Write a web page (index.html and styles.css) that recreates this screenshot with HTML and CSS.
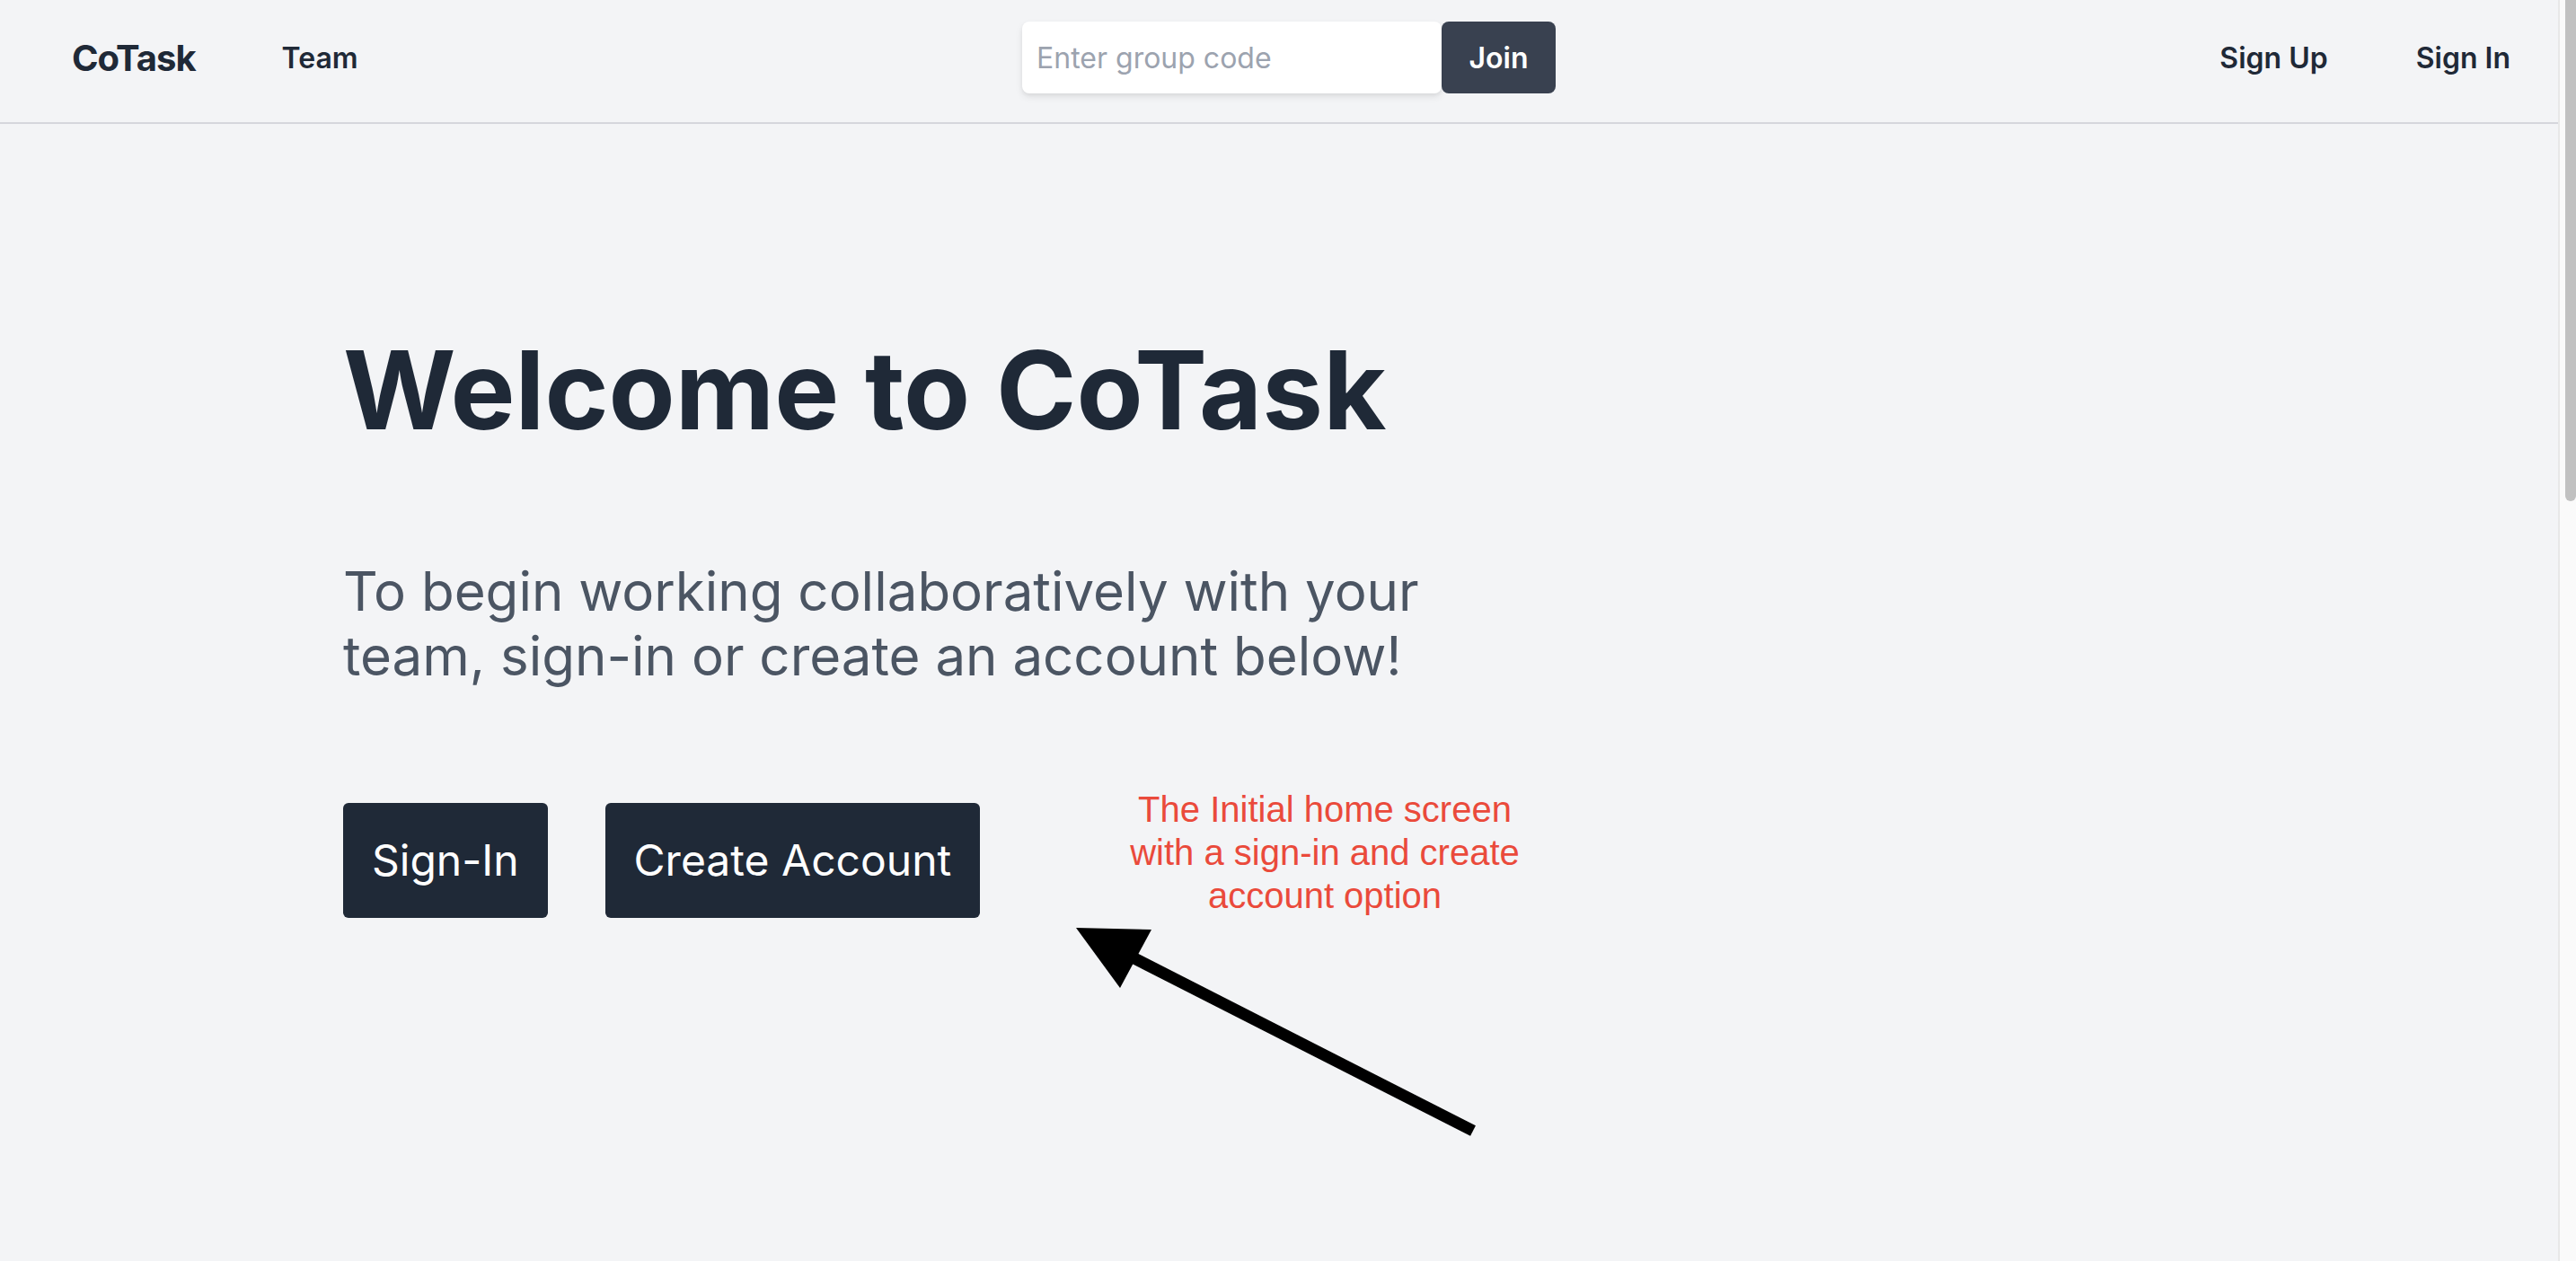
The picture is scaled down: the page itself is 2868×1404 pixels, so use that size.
FILE: index.html
```html
<!DOCTYPE html>
<html lang="en">
<head>
<meta charset="utf-8">
<title>CoTask</title>
<link rel="stylesheet" href="styles.css">
</head>
<body>
<div class="page">
  <div class="main">
    <header class="header">
      <div class="left">
        <a class="logo">CoTask</a>
        <a class="nav-link">Team</a>
      </div>
      <form class="join-form">
        <input class="code-input" type="text" placeholder="Enter group code">
        <button class="join-btn" type="button">Join</button>
      </form>
      <div class="right">
        <a class="nav-link">Sign Up</a>
        <a class="nav-link">Sign In</a>
      </div>
    </header>
    <section class="hero">
      <h1 class="title">Welcome to CoTask</h1>
      <p class="lead">To begin working collaboratively with your team, sign-in or create an account below!</p>
      <div class="actions">
        <button class="action-btn" type="button">Sign-In</button>
        <button class="action-btn" type="button">Create Account</button>
      </div>
      <div class="note">The Initial home screen<br>with a sign-in and create<br>account option</div>
      <svg class="arrow" width="480" height="270" viewBox="0 0 480 270">
        <line x1="75" y1="53" x2="460" y2="249" stroke="#000" stroke-width="13"/>
        <polygon points="18,23 102,25 67,90" fill="#000"/>
      </svg>
    </section>
  </div>
  <div class="scrollbar"><div class="thumb"></div></div>
</div>
</body>
</html>
```
FILE: styles.css
```css
html, body {
  margin: 0;
  padding: 0;
  height: 100%;
  overflow: hidden;
}
body {
  background: #f3f4f6;
  font-family: Inter, "Noto Sans", "Liberation Sans", sans-serif;
  color: #1f2937;
}
.page {
  display: flex;
  height: 1404px;
}
.main {
  flex: 1;
  min-width: 0;
  display: flex;
  flex-direction: column;
}
.header {
  display: flex;
  justify-content: space-between;
  align-items: center;
  height: 80px;
  padding: 24px 53px 32px 80px;
  border-bottom: 2px solid #d5d6dc;
}
.left, .right {
  display: flex;
  align-items: center;
}
.left { gap: 96px; }
.right { gap: 98px; }
.logo {
  font-size: 40px;
  font-weight: 700;
  letter-spacing: -1px;
  color: #1f2937;
}
.nav-link {
  font-size: 32px;
  font-weight: 600;
  color: #1f2937;
}
.join-form {
  display: flex;
  margin: 0;
}
.code-input {
  width: 467px;
  height: 80px;
  box-sizing: border-box;
  border: none;
  border-radius: 8px;
  background: #fff;
  padding: 0 16px;
  font-family: Inter, sans-serif;
  font-size: 32px;
  color: #1f2937;
  box-shadow: 0 4px 8px rgba(0,0,0,0.08), 0 2px 4px rgba(0,0,0,0.05);
  outline: none;
}
.code-input::placeholder { color: #9ca3af; }
.join-btn {
  width: 127px;
  height: 80px;
  border: none;
  border-radius: 8px;
  background: #394150;
  color: #fff;
  font-family: Inter, sans-serif;
  font-size: 32px;
  font-weight: 600;
}
.hero {
  position: relative;
  flex: 1;
  padding: 236px 0 0 382px;
}
.title {
  margin: 0 0 128px;
  font-size: 121px;
  line-height: 120px;
  font-weight: 700;
  color: #1f2937;
}
.lead {
  margin: 0 0 128px;
  width: 1300px;
  font-size: 60px;
  line-height: 72px;
  color: #4b5563;
}
.actions {
  display: flex;
  gap: 64px;
}
.action-btn {
  background: #1f2937;
  color: #fff;
  border: none;
  border-radius: 6px;
  padding: 32px 32px;
  font-family: Inter, sans-serif;
  font-size: 48px;
  line-height: 64px;
}
.note {
  position: absolute;
  left: 1225px;
  top: 739px;
  width: 500px;
  text-align: center;
  font-family: "Liberation Sans", Arial, sans-serif;
  font-size: 40px;
  line-height: 48px;
  color: #ea4a3b;
}
.arrow {
  position: absolute;
  left: 1180px;
  top: 872px;
}
.scrollbar {
  border-left: 2px solid #e8e8e8;
  background: #fafafa;
  padding-left: 6px;
  width: 12px;
}
.thumb {
  height: 558px;
  background: #c1c1c1;
  border-radius: 0 0 6px 6px;
}
```
